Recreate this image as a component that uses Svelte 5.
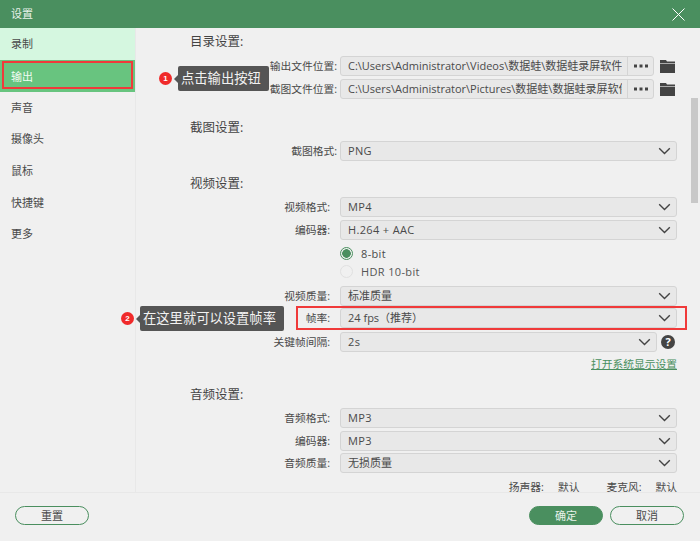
<script>
  const nav = ['录制', '输出', '声音', '摄像头', '鼠标', '快捷键', '更多'];
  const isLatin = (text) => /^[\x00-\x7f]+$/.test(text);
</script>

{#snippet chevron()}
  <svg class="chev" width="13" height="8" viewBox="0 0 13 8"><path d="M1.2 1.2 6.5 6.4 11.8 1.2" fill="none" stroke="#444" stroke-width="1.4"/></svg>
{/snippet}

{#snippet select(text)}
  <div class="select"><span class:latin={isLatin(text)}>{text}</span>{@render chevron()}</div>
{/snippet}

{#snippet pathField(label, value)}
  <div class="row">
    <span class="label">{label}</span>
    <div class="path-wrap">
      <div class="path">
        <span class="path-text">{value}</span>
        <span class="dots"><svg width="14" height="4" viewBox="0 0 14 4"><rect x="0" y="0.5" width="3" height="3" fill="#444"/><rect x="5.5" y="0.5" width="3" height="3" fill="#444"/><rect x="11" y="0.5" width="3" height="3" fill="#444"/></svg></span>
      </div>
      <svg class="folder" width="15" height="13" viewBox="0 0 15 13"><path d="M0 0H6L7 1.5H15V3H0Z" fill="#444"/><path d="M0 3.6H15V13H0Z" fill="#444"/></svg>
    </div>
  </div>
{/snippet}

{#snippet field(label, value)}
  <div class="row"><span class="label">{label}</span>{@render select(value)}</div>
{/snippet}

<div class="window">
  <header class="titlebar">
    <span>设置</span>
    <svg width="13" height="13" viewBox="0 0 13 13"><path d="M.5.5 12.5 12.5M12.5.5.5 12.5" stroke="#fff" stroke-width="1"/></svg>
  </header>

  <div class="body">
    <nav class="sidebar">
      {#each nav as item, i}
        <div class="nav-item" class:first={i === 0} class:active={i === 1}>{item}</div>
      {/each}
    </nav>

    <main class="content">
      <h2>目录设置:</h2>
      <div class="stack paths">
        {@render pathField('输出文件位置:', 'C:\\Users\\Administrator\\Videos\\数据蛙\\数据蛙录屏软件')}
        {@render pathField('截图文件位置:', 'C:\\Users\\Administrator\\Pictures\\数据蛙\\数据蛙录屏软件')}
      </div>

      <h2 class="shot">截图设置:</h2>
      <div class="stack">
        {@render field('截图格式:', 'PNG')}
      </div>

      <h2 class="video">视频设置:</h2>
      <div class="stack inset">
        {@render field('视频格式:', 'MP4')}
        {@render field('编码器:', 'H.264 + AAC')}
      </div>
      <div class="radios">
        <label class="radio"><span class="dot on"></span><span class="latin">8-bit</span></label>
        <label class="radio off"><span class="dot"></span><span class="latin">HDR 10-bit</span></label>
      </div>
      <div class="stack inset">
        {@render field('视频质量:', '标准质量')}
        {@render field('帧率:', '24 fps（推荐）')}
        <div class="row keyframe">
          <span class="label">关键帧间隔:</span>
          <div class="select-help">
            {@render select('2s')}
            <span class="help">?</span>
          </div>
        </div>
      </div>
      <div class="link-row"><span class="link">打开系统显示设置</span></div>

      <h2 class="audio">音频设置:</h2>
      <div class="stack inset">
        {@render field('音频格式:', 'MP3')}
        {@render field('编码器:', 'MP3')}
        {@render field('音频质量:', '无损质量')}
      </div>
      <div class="devices">
        <span>扬声器:</span><span class="val">默认</span>
        <span class="mic">麦克风:</span><span class="val">默认</span>
      </div>

      <div class="scrollbar"></div>
    </main>
  </div>

  <footer class="footer">
    <button class="btn">重置</button>
    <div class="right">
      <button class="btn primary">确定</button>
      <button class="btn">取消</button>
    </div>
  </footer>

  <div class="mark nav-mark"></div>
  <div class="mark fps-mark"></div>
  <div class="note note1"><i class="badge">1</i><span class="tip">点击输出按钮</span></div>
  <div class="note note2"><i class="badge">2</i><span class="tip">在这里就可以设置帧率</span></div>
</div>

<style>
  :global(body) { margin: 0; background: #f0f0f0; }
  .window {
    position: relative; width: 700px; height: 541px; overflow: hidden;
    display: flex; flex-direction: column; background: #f0f0f0; color: #4a4a4a;
    font: 11px/20px "Open Sans", "Noto Sans CJK SC", sans-serif;
  }
  .titlebar {
    flex: none; height: 28px; box-sizing: border-box; background: #4a8f5f; color: #e8f2ea;
    display: flex; align-items: center; justify-content: space-between; padding: 0 15px 0 11px;
  }
  .body { flex: none; height: 465px; display: flex; border-bottom: 1px solid #e8e8e8; box-sizing: border-box; }
  .sidebar { flex: none; width: 135px; border-right: 1px solid #e8e8e8; }
  .nav-item { height: 31.7px; line-height: 31.7px; padding-left: 11px; }
  .nav-item.first { background: #d5f7e0; height: 32px; }
  .nav-item.active { background: #68c47f; color: #f2fbf4; line-height: 33px; }

  .content { position: relative; flex: 1; padding: 3px 0 0 54px; overflow: hidden; }
  h2 { margin: 0; height: 20px; font-size: 12.5px; font-weight: 400; line-height: 22px; color: #444; }
  h2.shot { margin-top: 18px; }
  h2.video { margin-top: 12px; }
  h2.audio { margin-top: 10px; }

  .stack { display: flex; flex-direction: column; gap: 2.5px; margin-top: 4px; }
  .paths { margin-top: 5px; gap: 3px; }
  .row { display: flex; height: 20px; margin-left: -54px; }
  .keyframe { margin-top: 1.5px; }
  .label { flex: none; width: 201px; font-size: 10.75px; line-height: 21px; text-align: right; white-space: nowrap; margin-right: 3px; }
  .inset .label { width: 194px; margin-right: 10px; }
  .latin { letter-spacing: 0.35px; }

  .select, .path {
    box-sizing: border-box; height: 20px; background: #e8e8e8; border: 1px solid #d4d4d4; border-radius: 3px;
    display: flex; align-items: center;
  }
  .select { width: 337px; justify-content: space-between; padding: 0 5px 0 7px; }
  .select-help { display: flex; align-items: center; width: 337px; }
  .select-help .select { flex: 1; }
  .help {
    flex: none; width: 14px; height: 14px; margin: 0 2px 0 4px; border-radius: 50%; background: #444; color: #fff;
    font-size: 11px; font-weight: 700; line-height: 14px; text-align: center;
  }
  .path-wrap { display: flex; align-items: center; }
  .path { width: 314px; padding-left: 7px; }
  .path-text { width: 274px; overflow: hidden; white-space: nowrap; flex: none; }
  .dots {
    flex: 1; margin-left: 5px; align-self: stretch; border-left: 1px solid #d4d4d4;
    display: flex; align-items: center; justify-content: center;
  }
  .folder { margin-left: 6px; }

  .radios { margin: 5px 0 5px 150px; }
  .radio { display: flex; align-items: center; height: 18px; gap: 8px; line-height: 17px; }
  .radio.off { color: #555; }
  .dot { box-sizing: border-box; width: 13px; height: 13px; border-radius: 50%; border: 1px solid #e0e0e0; }
  .dot.on { border-color: #4a8f5f; background: radial-gradient(circle, #4a8f5f 0 4px, #f0f0f0 4.6px); }

  .link-row { display: flex; justify-content: flex-end; width: 487px; margin-top: 2px; font-size: 10.75px; }
  .link { color: #4a8f5f; text-decoration: underline; }

  .devices { display: flex; width: 487px; justify-content: flex-end; margin-top: 7px; font-size: 10.75px; line-height: 14px; }
  .val { margin-left: 14px; }
  .mic { margin-left: 27px; }

  .scrollbar { position: absolute; right: 2px; top: 70px; width: 7px; height: 105px; background: #c8c8c8; }

  .footer { flex: 1; display: flex; justify-content: space-between; align-items: flex-start; padding: 13px 16px 0 15px; }
  .right { display: flex; gap: 7px; }
  .btn {
    box-sizing: border-box; width: 74px; height: 19px; padding: 0; border: 1px solid #4a8f5f; border-radius: 10px;
    background: #f0f0f0; color: #4a4a4a; font: inherit; line-height: 17px;
  }
  .btn.primary { background: #4a8f5f; color: #e8f2ea; }

  .mark { position: absolute; box-sizing: border-box; border: 2px solid #f03a3a; }
  .nav-mark { left: 2px; top: 61px; width: 131px; height: 28px; }
  .fps-mark { left: 296px; top: 306px; width: 391px; height: 24px; }

  .note { position: absolute; display: flex; align-items: center; }
  .note1 { left: 159px; top: 66px; }
  .note2 { left: 121px; top: 306px; }
  .badge {
    width: 13px; height: 13px; border-radius: 50%; background: #f02a2a; color: #fff; font: 700 8px/13px "Liberation Sans", sans-serif;
    text-align: center; margin-right: 6px;
  }
  .tip {
    position: relative; height: 25px; padding: 0 8px 0 3px; background: #555; color: #f2f2f2; border-radius: 2px;
    font-size: 13.3px; line-height: 25px; white-space: nowrap;
  }
  .tip::before {
    content: ""; position: absolute; left: -4px; top: 8.5px;
    border: 4px solid transparent; border-left: 0; border-right-color: #555;
  }
</style>
